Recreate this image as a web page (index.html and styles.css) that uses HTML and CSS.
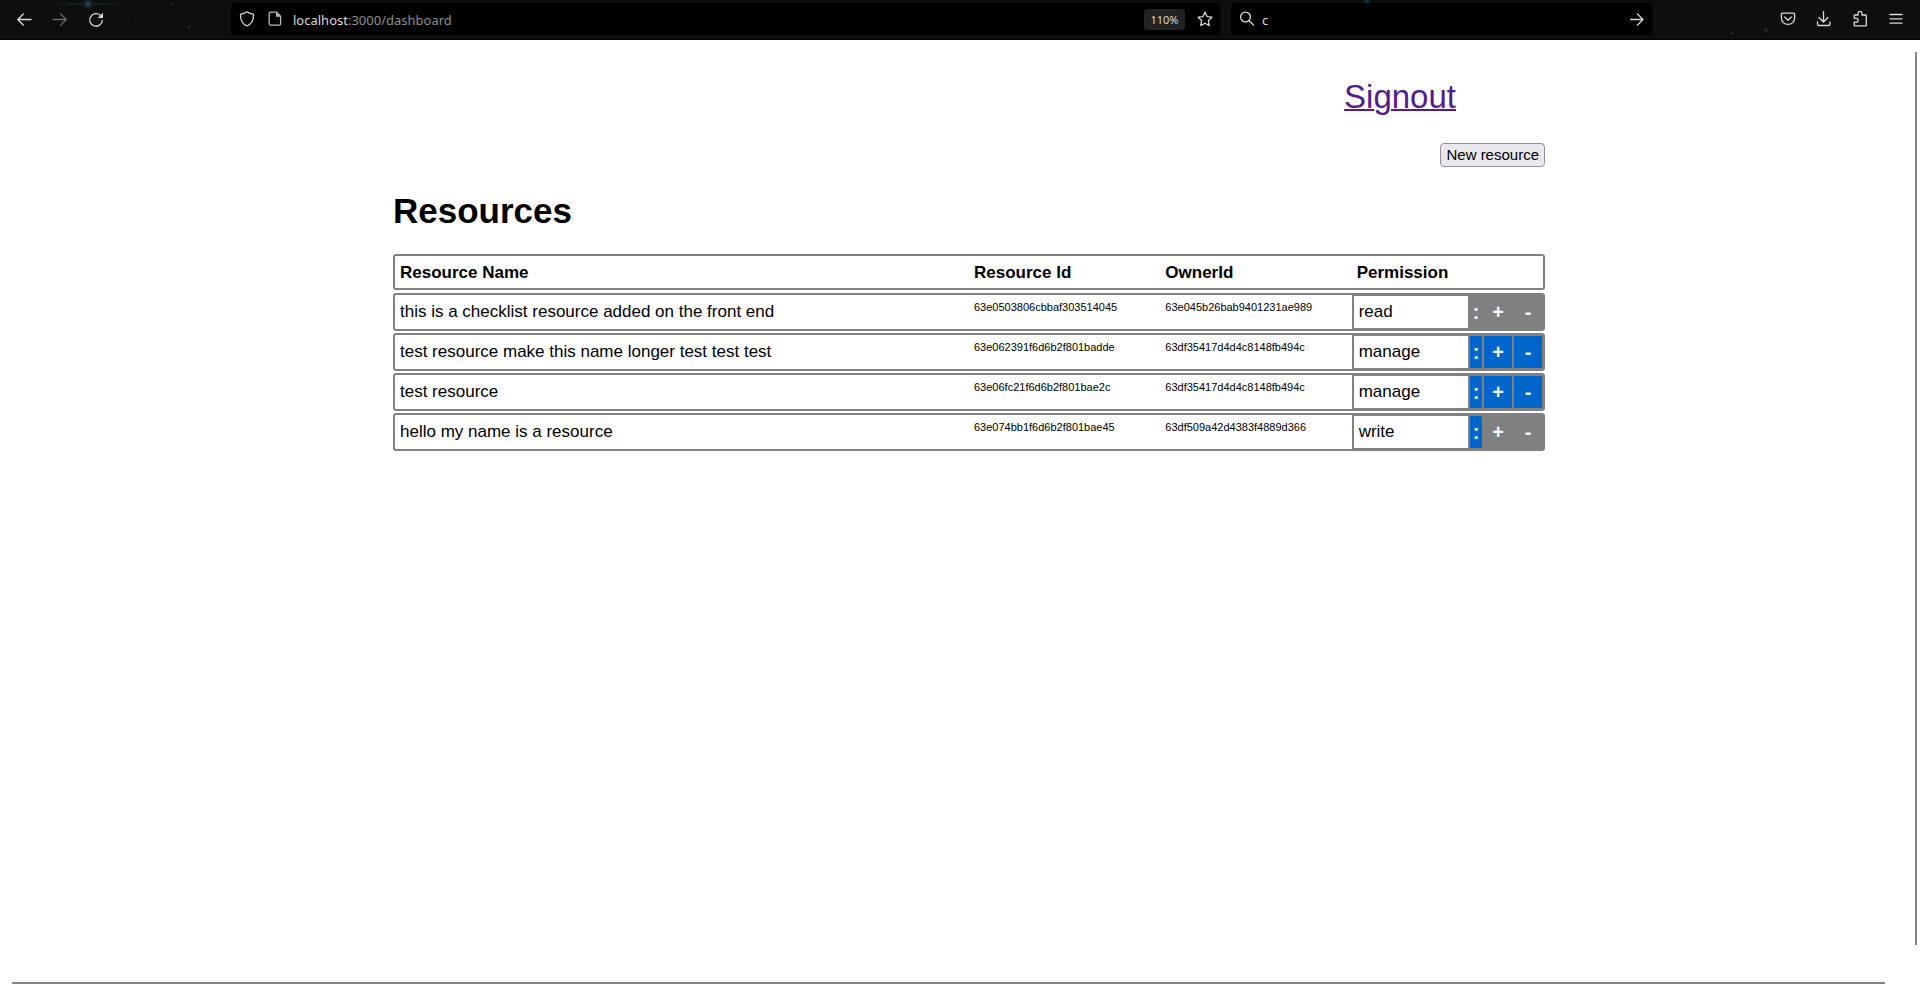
FILE: index.html
```html
<!DOCTYPE html>
<html lang="en">
<head>
<meta charset="utf-8">
<title>Dashboard</title>
<link rel="stylesheet" href="styles.css">
</head>
<body>
<header class="toolbar">
  <button class="tool low" aria-label="Back"><svg class="icon" viewBox="0 0 16 16"><path d="M15 7.5H1.8M7.3 2 1.8 7.5 7.3 13"/></svg></button>
  <button class="tool low dim" aria-label="Forward"><svg class="icon" viewBox="0 0 16 16"><path d="M1 7.5h13.2M8.700 2l5.500 5.500L8.700 13"/></svg></button>
  <button class="tool low" aria-label="Reload"><svg class="icon" viewBox="0 0 16 16"><path d="M12.200 3.200A6.300 6.300 0 1 0 14.300 8.500"/><path class="solid" d="M15 .8v5.300h-5.300z"/></svg></button>
  <div class="space"></div>
  <div class="field address">
    <svg class="icon" viewBox="0 0 16 16"><path d="M8 .8C6.200 2.100 4 2.900 1.600 3.100c-.5 5.400 1.900 9.900 6.400 11.900 4.500-2 6.900-6.500 6.400-11.900C12 2.900 9.800 2.100 8 .8z"/></svg>
    <svg class="icon page-icon" viewBox="0 0 16 16"><path d="M9.500 1.200h-6q-1.300 0-1.300 1.300v10.300q0 1.300 1.300 1.300h8.800q1.300 0 1.300-1.300V5.300z"/><path class="solid" d="M9 1v4.800h4.800z"/></svg>
    <span class="url"><b>localhost</b>:3000/dashboard</span>
    <button class="zoom">110%</button>
    <button class="star" aria-label="Bookmark"><svg class="icon" viewBox="0 0 16 16"><path d="m8 1.200 2 4.400 4.900.6-3.500 3.200.8 5.100L8 12.200l-4.200 2.300.8-5.100L1.100 6.200 6 5.600z"/></svg></button>
  </div>
  <div class="field search">
    <svg class="icon" viewBox="0 0 16 16"><circle cx="6.500" cy="6" r="4.900"/><path d="m10 9.500 4.500 4.500"/></svg>
    <input class="query" aria-label="Search" value="c">
    <button class="go low" aria-label="Search now"><svg class="icon" viewBox="0 0 16 16"><path d="M1.500 7.500h12.500M8.500 2l5.500 5.500L8.500 13"/></svg></button>
  </div>
  <div class="space"></div>
  <button class="tool" aria-label="Pocket"><svg class="icon" viewBox="0 0 16 16"><path d="M2.700 2.200h10.600q1.300 0 1.300 1.300v3.800a6.600 6.100 0 0 1-13.200 0V3.500q0-1.300 1.300-1.300z"/><path d="M4.700 6 8 9.200 11.300 6"/></svg></button>
  <button class="tool" aria-label="Downloads"><svg class="icon" viewBox="0 0 16 16"><path d="M7.500.6v10M3 6.500 7.500 11 12 6.500M1.500 11v2.200q0 1.300 1.300 1.300h9.900q1.300 0 1.300-1.300V11"/></svg></button>
  <button class="tool" aria-label="Extensions"><svg class="icon" viewBox="0 0 16 16"><path d="M2.200 4.700q0-.7.700-.7h3.200V2.300a1.900 1.900 0 0 1 3.800 0V4h3.700q.7 0 .7.700v9.500q0 .7-.7.700H2.900q-.7 0-.7-.7v-3.100h2a1.900 1.900 0 0 0 0-3.800h-2z"/></svg></button>
  <button class="tool low" aria-label="Menu"><svg class="icon" viewBox="0 0 16 16"><path d="M2 2.500h12M2 6.800h12M2 11.200h12"/></svg></button>
</header>
<div class="viewport">
  <main class="content">
    <nav class="links"><a class="signout" href="#">Signout</a></nav>
    <div class="actions"><button class="new">New resource</button></div>
    <h1 class="title">Resources</h1>
    <table class="resources">
      <thead>
        <tr><th>Resource Name</th><th>Resource Id</th><th>OwnerId</th><th>Permission</th></tr>
      </thead>
      <tbody>
        <tr><td>this is a checklist resource added on the front end</td><td class="id">63e0503806cbbaf303514045</td><td class="id">63e045b26bab9401231ae989</td>
          <td class="permission"><span class="level">read</span><button class="menu" disabled>:</button><button disabled>+</button><button disabled>-</button></td></tr>
        <tr><td>test resource make this name longer test test test</td><td class="id">63e062391f6d6b2f801badde</td><td class="id">63df35417d4d4c8148fb494c</td>
          <td class="permission"><span class="level">manage</span><button class="menu">:</button><button>+</button><button>-</button></td></tr>
        <tr><td>test resource</td><td class="id">63e06fc21f6d6b2f801bae2c</td><td class="id">63df35417d4d4c8148fb494c</td>
          <td class="permission"><span class="level">manage</span><button class="menu">:</button><button>+</button><button>-</button></td></tr>
        <tr><td>hello my name is a resource</td><td class="id">63e074bb1f6d6b2f801bae45</td><td class="id">63df509a42d4383f4889d366</td>
          <td class="permission"><span class="level">write</span><button class="menu">:</button><button disabled>+</button><button disabled>-</button></td></tr>
      </tbody>
    </table>
  </main>
  <div class="scroll-y"></div>
  <div class="scroll-x"></div>
</div>
</body>
</html>
```
FILE: styles.css
```css
* { box-sizing: border-box; }

body {
  margin: 0;
  min-height: 100vh;
  display: flex;
  flex-direction: column;
  background: #fff;
  color: #000;
  font: 17px/20px "Liberation Sans", Arial, sans-serif;
}

button, input { font: inherit; color: inherit; }

/* Browser toolbar */
.toolbar {
  display: flex;
  align-items: center;
  height: 40px;
  padding: 0 6px 1px;
  color: #d8d8d4;
  border-bottom: 1px solid #000;
  background:
    radial-gradient(circle at 88px 4px, #2f5563 0, #14252c 3px, transparent 6px),
    radial-gradient(ellipse 45px 2px at 88px 4px, #12242b, transparent),
    radial-gradient(circle at 1367px 1px, #17384a 0, transparent 4px),
    radial-gradient(circle at 136px 18px, #262626 0, transparent 2px),
    radial-gradient(circle at 189px 27px, #343434 0, transparent 2px),
    radial-gradient(circle at 172px 4px, #242424 0, transparent 2px),
    radial-gradient(circle at 216px 16px, #242424 0, transparent 2px),
    radial-gradient(circle at 1732px 33px, #3a2828 0, transparent 2px),
    radial-gradient(circle at 1766px 30px, #303030 0, transparent 3px),
    #0e0e0e;
}

.icon {
  display: block;
  flex: none;
  width: 16px;
  height: 16px;
  fill: none;
  stroke: currentColor;
  stroke-width: 1.3;
  stroke-linejoin: round;
  stroke-linecap: round;
}

.icon .solid { fill: currentColor; stroke: none; }

.tool, .star, .go {
  display: flex;
  justify-content: center;
  flex: none;
  padding: 0;
  border: 0;
  background: none;
}

.tool { width: 36px; }
.low { padding-top: 2px; }
.dim { color: #666; }
.space { flex: 117 1 0; }

.field {
  display: flex;
  align-items: center;
  min-width: 0;
  height: 32px;
  padding: 0 8px;
  border-radius: 4px;
  background: #000;
  font: 13px/20px "Noto Sans", "Open Sans", sans-serif;
}

.address { flex: 974 1 0; margin-right: 10px; }
.search { flex: 406 1 0; }
.page-icon { margin: 0 10px 0 12px; color: #b8b8b8; }
.url { flex: 1; padding-top: 1px; color: #8f8f8f; }
.url b { font-weight: normal; color: #d8d8d8; }

.zoom {
  width: 41px;
  height: 21px;
  margin-right: 12px;
  padding: 0;
  border: 0;
  border-radius: 3px;
  background: #222;
  font-size: 11px;
  line-height: 21px;
}

.query {
  flex: 1;
  min-width: 0;
  padding: 1px 0 0;
  margin-left: 7px;
  border: 0;
  background: none;
  color: #d8d8d8;
}

/* Page */
.viewport { position: relative; flex: 1; }

.content {
  width: calc(60vw + 18px);
  margin: 0 auto;
  padding: 38px 0 0 18px;
}

.links { padding-right: 89px; text-align: right; }
.signout { display: block; font-size: 33px; line-height: 38px; color: #551a8b; text-decoration-thickness: 2px; }
.actions { display: flex; justify-content: flex-end; margin-top: 27px; }

.new {
  height: 24px;
  padding: 0 5px;
  border: 1px solid #8f8f9d;
  border-radius: 4px;
  background: #e9e9ed;
  font-size: 15px;
  line-height: 22px;
}

.title { margin: 24px 0 23px; font-size: 35px; line-height: 40px; }

/* Resource table */
.resources, .resources thead { display: block; }
.resources tbody { display: grid; gap: 2px; margin-top: 3px; }

.resources tr {
  display: grid;
  grid-template-columns: 3fr 1fr 1fr 1fr;
  height: 38px;
  border: 2px solid #808080;
  border-radius: 3px;
}

.resources thead tr { height: 36px; }
.resources th, .resources td { padding: 7px 5px 5px; text-align: left; }
.resources .id { padding-top: 6px; font-size: 11px; line-height: 12px; }

.resources .permission {
  display: flex;
  gap: 2px;
  padding: 1px 1px 1px 2px;
  background: #808080;
}

.level { flex: 1; padding: 6px 5px; background: #fff; }

.permission button {
  width: 28px;
  padding: 0;
  border: 0;
  background: #0066cc;
  color: #f0f8ff;
  font-size: 20px;
  font-weight: bold;
}

.permission .menu { width: 12px; }
.permission button:disabled { background: #808080; }

/* Overlay scrollbars */
.scroll-y, .scroll-x { position: absolute; background: #858585; }
.scroll-y { top: 12px; right: 3px; bottom: 42px; width: 2px; }
.scroll-x { left: 12px; right: 35px; bottom: 3px; height: 2px; }
```
